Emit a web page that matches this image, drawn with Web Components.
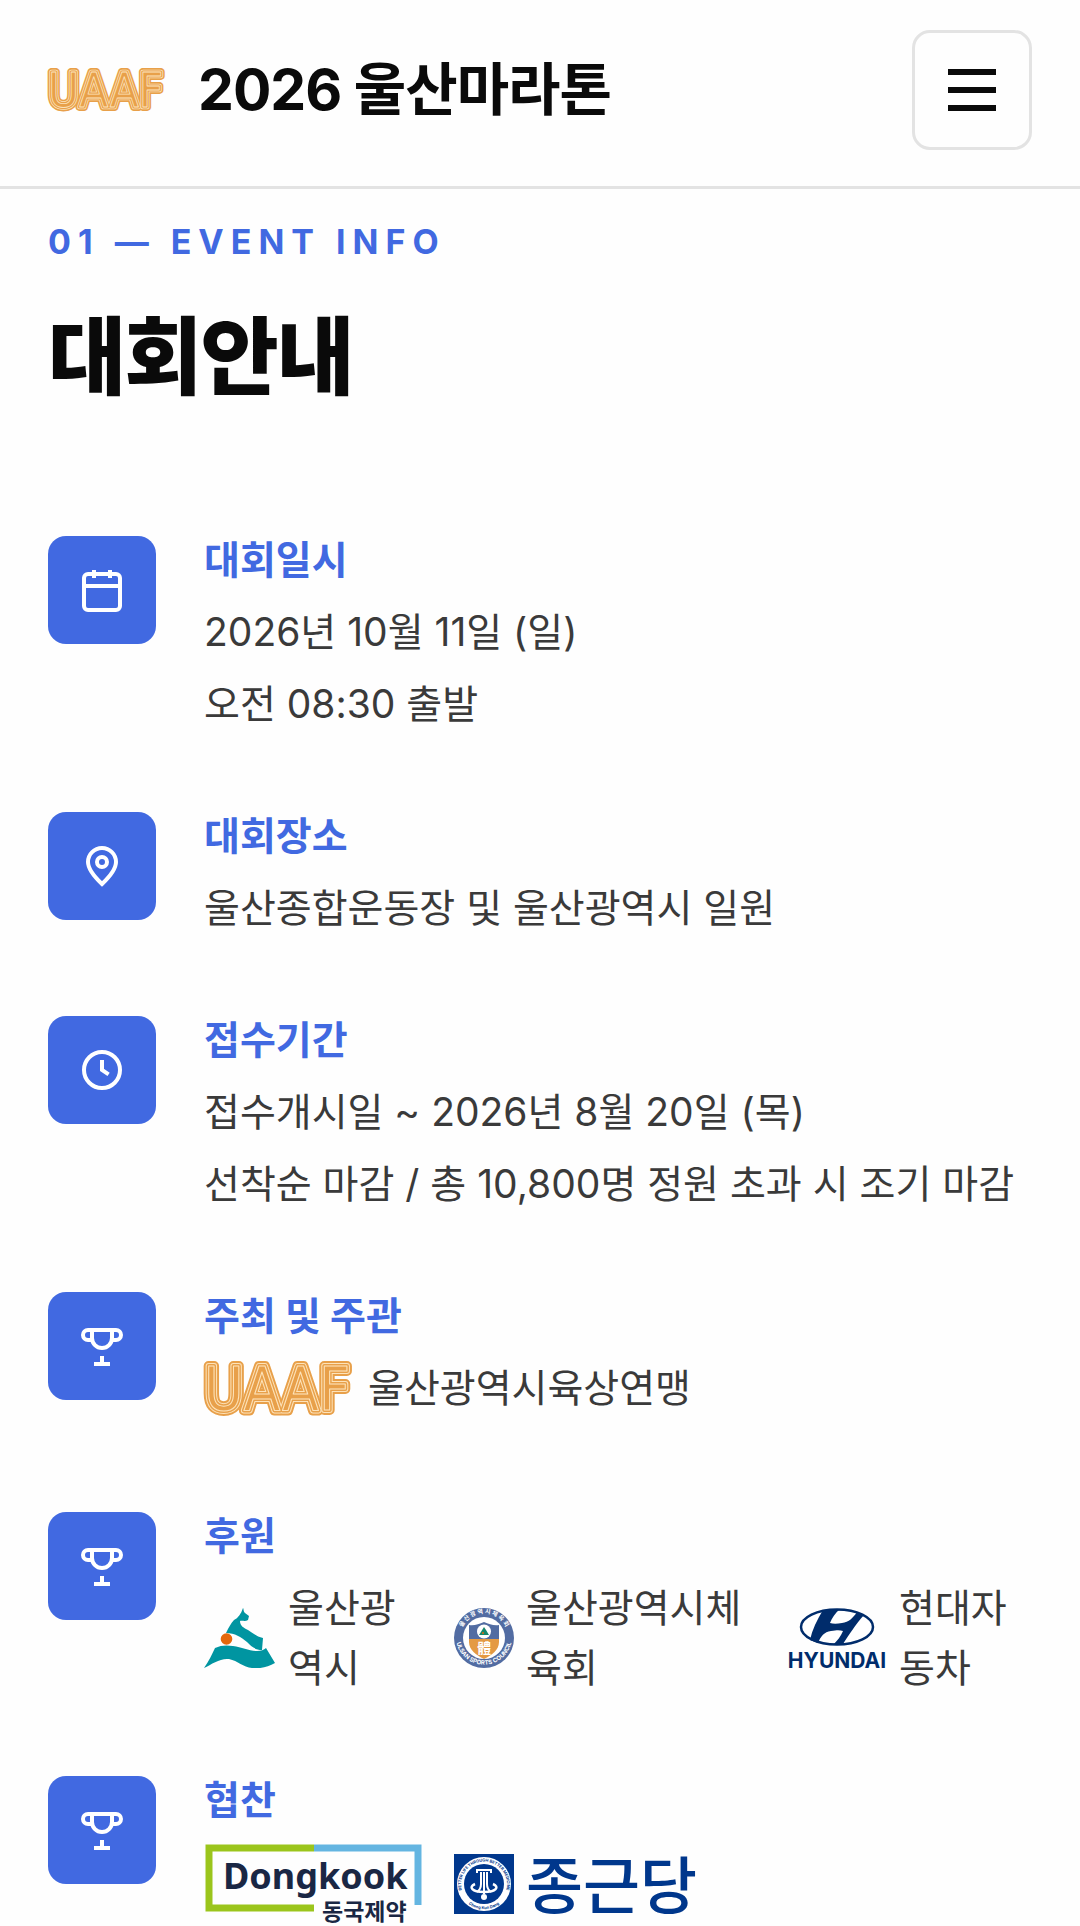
<!DOCTYPE html>
<html lang="ko">
<head>
<meta charset="utf-8">
<meta name="viewport" content="width=device-width, initial-scale=1">
<title>2026 울산마라톤</title>
<style>
  :root {
    --blue: #4169e1;
    --ink: #0a0a0a;
    --text: #3a3a3a;
    --line: #e3e3e3;
  }
  body {
    margin: 0;
    background: #fefefe;
    color: var(--text);
    font-family: Inter, "Noto Sans CJK KR", sans-serif;
    font-size: 39px;
    line-height: 72px;
  }
</style>
</head>
<body>
<marathon-header>2026 울산마라톤</marathon-header>
<main>
  <info-section>
    <span slot="eyebrow">01 — EVENT INFO</span>
    <span slot="title">대회안내</span>
    <info-row icon="calendar">
      <span slot="label">대회일시</span>
      2026년 10월 11일 (일)<br>오전 08:30 출발
    </info-row>
    <info-row icon="pin">
      <span slot="label">대회장소</span>
      울산종합운동장 및 울산광역시 일원
    </info-row>
    <info-row icon="clock">
      <span slot="label">접수기간</span>
      접수개시일 ~ 2026년 8월 20일 (목)<br>선착순 마감 / 총 10,800명 정원 초과 시 조기 마감
    </info-row>
    <info-row icon="trophy">
      <span slot="label">주최 및 주관</span>
      <host-org>울산광역시육상연맹</host-org>
    </info-row>
    <info-row icon="trophy">
      <span slot="label">후원</span>
      <org-list>
        <org-item><ulsan-logo slot="logo"></ulsan-logo>울산광역시</org-item>
        <org-item><council-logo slot="logo"></council-logo>울산광역시체육회</org-item>
        <org-item><hyundai-logo slot="logo"></hyundai-logo>현대자동차</org-item>
      </org-list>
    </info-row>
    <info-row icon="trophy">
      <span slot="label">협찬</span>
      <sponsor-list>
        <dongkook-logo></dongkook-logo>
        <ckd-logo></ckd-logo>
      </sponsor-list>
    </info-row>
  </info-section>
</main>
<script>
  function define(name, html) {
    const template = document.createElement('template');
    template.innerHTML = html;
    customElements.define(name, class extends HTMLElement {
      constructor() {
        super();
        this.attachShadow({ mode: 'open' }).append(template.content.cloneNode(true));
      }
    });
  }

  /* Striped wordmark: nested strokes on one word give the parallel lines. */
  define('uaaf-logo', `
    <style>
      :host { display: block; width: 152px; flex: none; }
      svg { display: block; width: 100%; height: auto; overflow: visible; }
      text { font: 400 60px "DejaVu Sans Condensed", sans-serif; fill: none; stroke-linejoin: round; }
      .a { stroke: #e8a04a; }
      .b { stroke: #fde3ba; }
      .core { fill: #e8a04a; }
    </style>
    <svg viewBox="0 0 152 58" role="img" aria-label="UAAF">
      <text class="a" x="0" y="51" stroke-width="10">UAAF</text>
      <g aria-hidden="true">
        <text class="b" x="0" y="51" stroke-width="6">UAAF</text>
        <text class="a" x="0" y="51" stroke-width="4">UAAF</text>
        <text class="b core" x="0" y="51" stroke-width="1">UAAF</text>
      </g>
    </svg>`);

  define('marathon-header', `
    <style>
      :host { display: block; border-bottom: 3px solid var(--line); }
      header { display: flex; align-items: center; justify-content: space-between; padding: 30px 48px 36px; }
      a { display: flex; align-items: center; gap: 30px; color: var(--ink); text-decoration: none;
          font-weight: 700; font-size: 57px; letter-spacing: -1px; }
      uaaf-logo { width: 120px; letter-spacing: 0; }
      button { display: flex; flex-direction: column; align-items: center; justify-content: center; gap: 12px;
               width: 120px; height: 120px; padding: 0; border: 3px solid var(--line); border-radius: 18px;
               background: none; cursor: pointer; }
      i { display: block; width: 48px; height: 6px; background: var(--ink); }
    </style>
    <header>
      <a href="#"><uaaf-logo></uaaf-logo><span><slot></slot></span></a>
      <button type="button" aria-label="메뉴 열기"><i></i><i></i><i></i></button>
    </header>`);

  define('info-section', `
    <style>
      :host { display: block; padding: 29px 48px 0; }
      p { margin: 0 0 38px; color: var(--blue); font-size: 34px; line-height: 48px; font-weight: 700; letter-spacing: 7px; }
      h1 { margin: 0 0 112px; color: var(--ink); font-size: 85px; line-height: 108px; font-weight: 900; letter-spacing: -2px; }
      .rows { display: flex; flex-direction: column; gap: 60px; }
    </style>
    <p><slot name="eyebrow"></slot></p>
    <h1><slot name="title"></slot></h1>
    <div class="rows"><slot></slot></div>`);

  const icons = {
    calendar: '<rect x="3" y="4" width="18" height="18" rx="2"/><path d="M8 2v4M16 2v4M3 10h18"/>',
    pin: '<path d="M12 21C16 17.200 19 13.600 19 10a7 7 0 0 0-14 0c0 3.600 3 7.200 7 11z"/><circle cx="12" cy="10" r="2.500"/>',
    clock: '<circle cx="12" cy="12" r="9"/><path d="M12 7v5l3.300 2.200"/>',
    trophy: '<path d="M7 4h10v4a5 5 0 0 1-10 0zM7 4H5a2.400 2.400 0 0 0 0 5h2M17 4h2a2.400 2.400 0 0 1 0 5h-2M12 17v4M8 21h8"/>'
  };
  const rowTemplate = document.createElement('template');
  rowTemplate.innerHTML = `
    <style>
      :host { display: flex; align-items: flex-start; gap: 48px; }
      .icon { display: grid; place-items: center; flex: none; width: 108px; height: 108px; margin-top: 12px;
              border-radius: 18px; background: var(--blue); }
      svg { width: 48px; height: 48px; fill: none; stroke: #fff; stroke-width: 2; }
      .body { flex: 1; min-width: 0; }
      h2 { margin: 0; color: var(--blue); font-size: 39px; line-height: 72px; font-weight: 700; }
    </style>
    <div class="icon"><svg viewBox="0 0 24 24" aria-hidden="true"></svg></div>
    <div class="body"><h2><slot name="label"></slot></h2><slot></slot></div>`;
  customElements.define('info-row', class extends HTMLElement {
    constructor() {
      super();
      this.attachShadow({ mode: 'open' }).append(rowTemplate.content.cloneNode(true));
    }
    connectedCallback() {
      this.shadowRoot.querySelector('svg').innerHTML = icons[this.getAttribute('icon')] || '';
    }
  });

  define('host-org', `
    <style>:host { display: flex; align-items: center; gap: 12px; padding-bottom: 16px; }</style>
    <uaaf-logo></uaaf-logo><span><slot></slot></span>`);

  define('org-list', `
    <style>:host { display: grid; grid-template-columns: 206fr 289fr 245fr; gap: 44px; padding: 6px 0; }</style>
    <slot></slot>`);

  define('org-item', `
    <style>
      :host { display: flex; align-items: center; gap: 12px; min-width: 0; line-height: 60px; }
      span { flex: 1; min-width: 0; }
    </style>
    <slot name="logo"></slot><span><slot></slot></span>`);

  define('sponsor-list', `
    <style>:host { display: flex; align-items: center; gap: 32px; padding-top: 6px; }</style>
    <slot></slot>`);

  define('ulsan-logo', `
    <style>:host { display: block; flex: none; } svg { display: block; }</style>
    <svg width="72" height="60" viewBox="0 0 72 60" role="img" aria-label="울산광역시">
      <g fill="#0095a1">
        <path d="M0 60C5 53 8 46 11 40c6-3 12-3 18-2 9 1 16 5 24 5 4 0 7-1 9-3l9 15c-7 4-15 6-23 5-9-1-14-7-23-9-9-1-17 5-25 9z"/>
        <path d="M22 25c3-6 5-10 8-13 4-2 7-6 9-12 1 1 0 3 2 5l4 3-1 4c-3 2-6 0-8 1 0 5 4 7 8 9 5 3 9 7 15 8l-1 12c-7 0-11-4-15-8-6-5-12-9-21-9z"/>
      </g>
      <circle cx="22.500" cy="31" r="5.800" fill="#e5680c"/>
    </svg>`);

  define('council-logo', `
    <style>
      :host { display: block; flex: none; } svg { display: block; }
      .ring { font: 700 6px Inter, "Noto Sans CJK KR", sans-serif; fill: #fff; }
    </style>
    <svg width="60" height="60" viewBox="0 0 60 60" role="img" aria-label="울산광역시체육회">
      <defs>
        <path id="top" d="M7.200 37A24 24 0 1 1 52.800 37"/>
        <path id="low" d="M2.500 34A28 28 0 0 0 57.500 34"/>
      </defs>
      <circle cx="30" cy="30" r="30" fill="#526ca2"/>
      <circle cx="30" cy="30" r="21" fill="#fff"/>
      <path d="M15 17c5 1 10-1 15-3 5 2 10 4 15 3v15H15z" fill="#526ca2"/>
      <path d="M15 31h30v3c0 8-7 13-15 17-8-4-15-9-15-17z" fill="#e49a43"/>
      <circle cx="30" cy="23.500" r="7" fill="#fff"/>
      <path d="M25 27l5-8 2 3 3 5z" fill="#16866c"/><circle cx="29" cy="25" r="1" fill="#e5680c"/>
      <text x="30" y="45" text-anchor="middle" font-family="'Noto Sans CJK KR', sans-serif" font-size="14" font-weight="700" fill="#fff">體</text>
      <text class="ring"><textPath href="#top" startOffset="50%" text-anchor="middle">울 산 광 역 시 체 육 회</textPath></text>
      <text class="ring"><textPath href="#low" startOffset="50%" text-anchor="middle">ULSAN SPORTS COUNCIL</textPath></text>
    </svg>`);

  define('hyundai-logo', `
    <style>:host { display: block; flex: none; } svg { display: block; overflow: visible; }
      text { font: 700 21px Inter, sans-serif; fill: #002c6b; }</style>
    <svg width="100" height="60" viewBox="0 0 100 60" role="img" aria-label="HYUNDAI">
      <ellipse cx="50" cy="19" rx="36" ry="17.500" fill="#fff" stroke="#002c6b" stroke-width="2.500"/>
      <path fill="#002c6b" d="M36 2C30 12 25 22 23 32l8 3c3-7 6-11 13-12 6-1 9-1 12 0-2 5-6 10-10 14l10-1C62 27 68 17 77 7l-7-3c-4 6-8 10-15 11-5 1-9 1-12 0 2-5 5-10 10-14z"/>
      <text x="50" y="60" text-anchor="middle">HYUNDAI</text>
    </svg>`);

  define('dongkook-logo', `
    <style>:host { display: block; flex: none; } svg { display: block; overflow: visible; } text { fill: #1a2744; font-weight: 700; }</style>
    <svg width="218" height="84" viewBox="0 0 218 84" role="img" aria-label="Dongkook 동국제약">
      <path d="M110 6H5v60h105" fill="none" stroke="#9bc51c" stroke-width="7"/>
      <path d="M110 6h104v57" fill="none" stroke="#64b5e1" stroke-width="7"/>
      <text x="19" y="47" font-family="'Noto Sans', sans-serif" font-size="36">Dongkook</text>
      <text x="118" y="78" font-family="'Noto Sans CJK KR', sans-serif" font-size="23">동국제약</text>
    </svg>`);

  define('ckd-logo', `
    <style>:host { display: flex; align-items: center; gap: 12px; height: 84px; color: #00378c; }
      span { font: 500 62px/80px "Noto Sans CJK KR", sans-serif; padding-bottom: 4px; }
      text { font: 700 4px Inter, sans-serif; fill: #00378c; }</style>
    <svg width="60" height="60" viewBox="0 0 60 60" aria-hidden="true">
      <defs>
        <path id="arc" d="M9 40A23 23 0 1 1 51 40"/>
        <path id="low" d="M8 43A26 26 0 0 0 52 43"/>
      </defs>
      <path fill="#00378c" d="M0 0h60v60H0z"/>
      <circle cx="30" cy="30" r="27" fill="#fff"/>
      <circle cx="30" cy="30" r="20" fill="#00378c"/>
      <path d="M23 16h14M23 15v4M37 15v4M27 18v12c0 4-1 6-4 8M33 18v12c0 4 1 6 4 8M30 18v22" fill="none" stroke="#fff" stroke-width="2"/>
      <path d="M21 30c-7 3-3 8 9 8s16-5 9-8" fill="none" stroke="#fff" stroke-width="2.500"/>
      <circle cx="30" cy="43" r="3" fill="#fff"/>
      <text><textPath href="#arc" startOffset="50%" text-anchor="middle">BETTER LIFE THROUGH BETTER MEDICINE</textPath></text>
      <text><textPath href="#low" startOffset="50%" text-anchor="middle">Chong Kun Dang</textPath></text>
    </svg>
    <span>종근당</span>`);
</script>
</body>
</html>
